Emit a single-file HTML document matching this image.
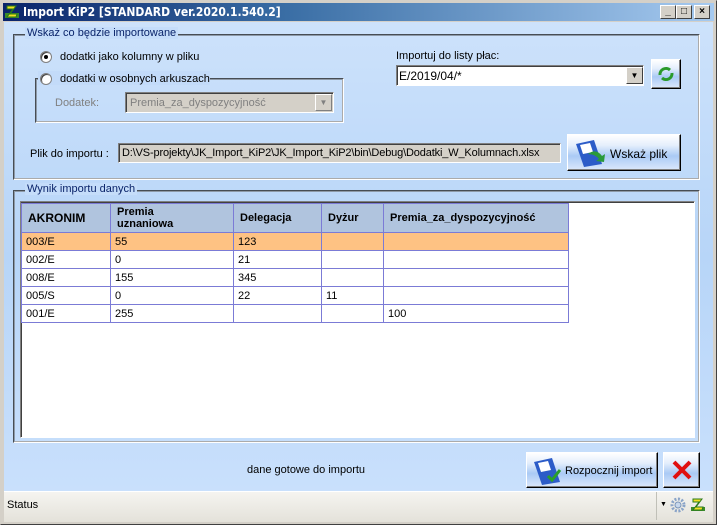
<!DOCTYPE html>
<html><head><meta charset="utf-8"><style>
*{margin:0;padding:0;box-sizing:border-box}
body{width:717px;height:525px;overflow:hidden;font-family:"Liberation Sans",sans-serif;font-size:11px;color:#000;background:#d4d0c8;position:relative}
.a{position:absolute}
.win{left:0;top:0;width:717px;height:525px;border:1px solid #404040;border-top-color:#d4d0c8;border-left-color:#d4d0c8}
.title{left:3px;top:3px;width:711px;height:18px;background:linear-gradient(90deg,#0a246a,#3a6ea5 40%,#a6caf0);color:#fff;font-weight:bold;font-size:12px;line-height:18px;padding-left:20px;font-family:"DejaVu Sans Condensed","Liberation Sans",sans-serif}
.client{left:4px;top:22px;width:709px;height:469px;background:linear-gradient(180deg,#cde2fb,#b7d5f8 50%,#c9e0fc)}
.tb{top:5px;width:16px;height:14px;background:#d4d0c8;border:1px solid;border-color:#fff #404040 #404040 #fff;color:#000;font-size:10px;line-height:11px;text-align:center;font-weight:bold}
.grp{border:2px groove #e8eef5;border-color:#8e9aa8 #fff #fff #8e9aa8;}
.leg{background:#c5ddfa;color:#0a246a;padding:0 2px;font-size:11px}
.radio{width:12px;height:12px;border-radius:50%;background:#fff;border:1px solid #808080;box-shadow:inset 1px 1px 0 #404040}
.btn{border:1px solid;border-color:#fff #000 #000 #fff;background:linear-gradient(180deg,#fff 0%,#e4eefc 30%,#aacaf5 60%,#dbe8fb 100%);box-shadow:inset -1px -1px 0 #808080}
.sunk{border:1px solid;border-color:#808080 #fff #fff #808080;box-shadow:inset 1px 1px 0 #404040}
table{border-collapse:collapse;position:absolute;left:21px;top:203px;table-layout:fixed;width:547px}
td{border:1px solid #7b7bd6;height:18px;padding:0 4px;font-size:11px;vertical-align:middle;overflow:hidden;white-space:nowrap}
th{border:1px solid #7b7bd6;background:#b0c4de;height:29px;text-align:left;padding:0 6px;font-size:11px;font-weight:bold;line-height:12px;overflow:hidden;white-space:nowrap}
</style></head><body>
<div class="a win"></div>
<div class="a title">Import KiP2 [STANDARD ver.2020.1.540.2]</div>
<svg class="a" style="left:4px;top:4px" width="16" height="16"><rect x="1" y="9" width="14" height="5" fill="#3a8a2a"/><path d="M3 2h9l-6 8h7l-1 3H3l6-8H3z" fill="#f0e020" stroke="#2a7a1a" stroke-width="1"/></svg>
<div class="a tb" style="left:660px">_</div>
<div class="a tb" style="left:676px">□</div>
<div class="a tb" style="left:694px">×</div>
<div class="a client"></div>

<div class="a grp" style="left:13px;top:34px;width:687px;height:146px"></div>
<div class="a leg" style="left:25px;top:27px">Wskaż co będzie importowane</div>
<div class="a radio" style="left:40px;top:51px"></div><div class="a" style="left:44px;top:55px;width:4px;height:4px;background:#000;border-radius:50%"></div>
<div class="a" style="left:60px;top:51px">dodatki jako kolumny w pliku</div>
<div class="a grp" style="left:35px;top:78px;width:309px;height:45px"></div>
<div class="a" style="left:38px;top:71px;width:172px;height:14px;background:#c3dbf9"></div>
<div class="a radio" style="left:40px;top:73px"></div>
<div class="a" style="left:60px;top:73px">dodatki w osobnych arkuszach</div>
<div class="a" style="left:55px;top:97px;color:#808080">Dodatek:</div>
<div class="a sunk" style="left:125px;top:92px;width:209px;height:21px;background:#d4d0c8;color:#808080;padding:4px 4px">Premia_za_dyspozycyjność</div>
<div class="a" style="left:315px;top:94px;width:17px;height:17px;background:#d4d0c8;border:1px solid;border-color:#fff #808080 #808080 #fff;color:#808080;font-size:8px;text-align:center;line-height:15px">▼</div>

<div class="a" style="left:396px;top:50px">Importuj do listy płac:</div>
<div class="a sunk" style="left:396px;top:65px;width:248px;height:21px;background:#fff;padding:3px 2px;font-size:12px">E/2019/04/*</div>
<div class="a" style="left:626px;top:67px;width:17px;height:17px;background:#d4d0c8;border:1px solid;border-color:#fff #404040 #404040 #fff;font-size:8px;text-align:center;line-height:15px">▼</div>
<div class="a btn" style="left:651px;top:59px;width:30px;height:30px"></div>
<svg class="a" style="left:657px;top:66px" width="18" height="16"><path d="M3 9a6 6 0 0 1 10-5" fill="none" stroke="#2a9a2a" stroke-width="3"/><path d="M15 7a6 6 0 0 1-10 5" fill="none" stroke="#2a9a2a" stroke-width="3"/></svg>

<div class="a" style="left:30px;top:148px">Plik do importu :</div>
<div class="a sunk" style="left:118px;top:143px;width:443px;height:20px;background:#d4d0c8;padding:3px 3px;letter-spacing:-0.15px">D:\VS-projekty\JK_Import_KiP2\JK_Import_KiP2\bin\Debug\Dodatki_W_Kolumnach.xlsx</div>
<div class="a btn" style="left:567px;top:134px;width:114px;height:37px"></div>
<svg class="a" style="left:574px;top:138px" width="34" height="30"><path d="M2 6l18-4 8 24-18 3z" fill="#2c5cc8"/><path d="M6 7l10-2 3 9-10 2z" fill="#fff"/><path d="M14 16q8-6 14 2l3-2-1 8-8-1 3-2q-4-5-11-5z" fill="#2a9a3a"/></svg>
<div class="a" style="left:610px;top:147px;font-size:12px">Wskaż plik</div>

<div class="a grp" style="left:13px;top:190px;width:687px;height:253px"></div>
<div class="a leg" style="left:25px;top:183px">Wynik importu danych</div>
<div class="a sunk" style="left:20px;top:201px;width:675px;height:237px;background:#fff"></div>
<table>
<colgroup><col style="width:89px"><col style="width:123px"><col style="width:88px"><col style="width:62px"><col style="width:185px"></colgroup>
<tr><th style="font-size:12px">AKRONIM</th><th>Premia<br>uznaniowa</th><th>Delegacja</th><th>Dyżur</th><th>Premia_za_dyspozycyjność</th></tr>
<tr style="background:#fec283"><td>003/E</td><td>55</td><td>123</td><td></td><td></td></tr>
<tr><td>002/E</td><td>0</td><td>21</td><td></td><td></td></tr>
<tr><td>008/E</td><td>155</td><td>345</td><td></td><td></td></tr>
<tr><td>005/S</td><td>0</td><td>22</td><td>11</td><td></td></tr>
<tr><td>001/E</td><td>255</td><td></td><td></td><td>100</td></tr>
</table>

<div class="a" style="left:247px;top:464px">dane gotowe do importu</div>
<div class="a btn" style="left:526px;top:452px;width:132px;height:36px"></div>
<svg class="a" style="left:532px;top:456px" width="34" height="30"><path d="M2 6l18-4 8 24-18 3z" fill="#2c5cc8"/><path d="M6 7l10-2 3 9-10 2z" fill="#fff"/><path d="M16 20l4 4 8-10" fill="none" stroke="#2aa02a" stroke-width="3"/></svg>
<div class="a" style="left:565px;top:465px;font-size:11px">Rozpocznij import</div>
<div class="a btn" style="left:663px;top:452px;width:37px;height:36px"></div>
<svg class="a" style="left:671px;top:459px" width="22" height="22"><path d="M3 3L19 19M19 3L3 19" stroke="#e01010" stroke-width="4"/></svg>

<div class="a" style="left:4px;top:491px;width:709px;height:31px;background:linear-gradient(180deg,#f5f4f0,#e4e2da);border-top:1px solid #fff"></div>
<div class="a" style="left:7px;top:499px">Status</div>
<div class="a" style="left:656px;top:492px;width:1px;height:28px;background:#c0c0b8"></div>
<div class="a" style="left:660px;top:501px;font-size:7px">▼</div>
<svg class="a" style="left:670px;top:497px" width="16" height="16"><circle cx="8" cy="8" r="6" fill="none" stroke="#8aa4c8" stroke-width="3" stroke-dasharray="2 1.5"/><circle cx="8" cy="8" r="3" fill="#c8d8ec" stroke="#7a94b8"/></svg>
<svg class="a" style="left:690px;top:497px" width="16" height="16"><rect x="1" y="10" width="14" height="4" fill="#3a8a2a"/><path d="M3 2h9l-6 8h7l-1 3H3l6-8H3z" fill="#f0e020" stroke="#2a7a1a"/></svg>
</body></html>
